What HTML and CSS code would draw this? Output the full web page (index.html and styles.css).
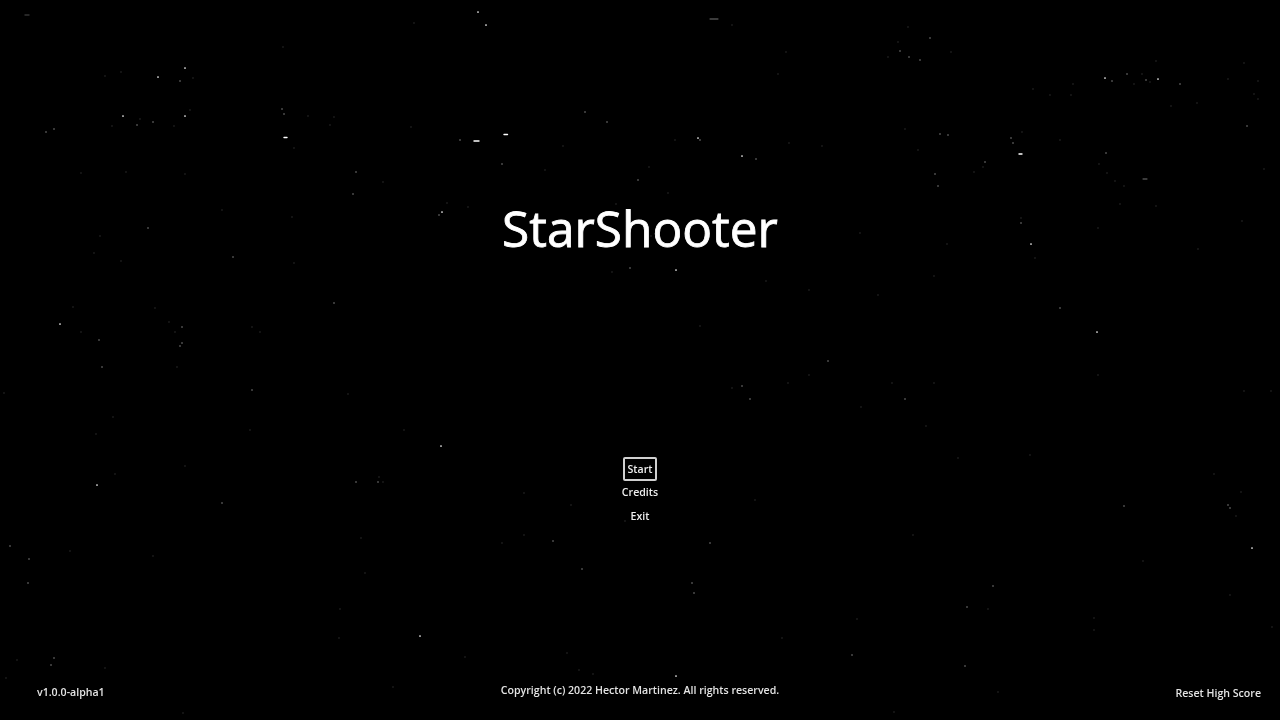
FILE: index.html
```html
<!DOCTYPE html>
<html lang="en">
<head>
<meta charset="utf-8">
<title>StarShooter</title>
<link rel="stylesheet" href="styles.css">
</head>
<body>
<svg class="stars" viewBox="0 0 1280 720" aria-hidden="true">
<path class="star-bright" d="M478 12h.01M486 25h.01M185 68h.01M158 77h.01M123 116h.01M185 116h.01M60 324h.01M442 212h.01M698 138h.01M742 156h.01M676 270h.01M1031 244h.01M1097 332h.01M1105 78h.01M1158 79h.01M441 446h.01M97 485h.01M420 636h.01M1252 548h.01M676 676h.01"/>
<path class="star-streak" d="M284 137.5h3M474 141h5M504 134.5h3.5M1019 154h3"/>
<path class="star-mid" d="M180 81h.01M137 125h.01M153 122h.01M282 109h.01M284 114h.01M460 140h.01M585 112h.01M607 122h.01M502 164h.01M356 172h.01M353 194h.01M638 180h.01M439 215h.01M148 228h.01M233 257h.01M334 303h.01M182 327h.01M182 343h.01M180 346h.01M99 340h.01M630 268h.01M46 132h.01M54 129h.01M700 140h.01M756 159h.01M940 134h.01M948 135h.01M1011 138h.01M1013 143h.01M985 162h.01M935 174h.01M938 186h.01M1106 153h.01M1021 223h.01M1060 308h.01M1247 126h.01M1112 81h.01M1127 74h.01M1146 80h.01M1180 84h.01M930 38h.01M900 51h.01M909 57h.01M920 60h.01M252 390h.01M222 503h.01M356 482h.01M378 482h.01M10 546h.01M29 559h.01M28 583h.01M553 541h.01M582 569h.01M54 658h.01M51 665h.01M102 367h.01M828 361h.01M742 386h.01M750 399h.01M905 399h.01M1124 506h.01M1228 505h.01M1230 508h.01M710 543h.01M692 583h.01M694 593h.01M993 586h.01M967 607h.01M852 655h.01M965 666h.01"/>
<path class="star-faint-streak" d="M710 19h8M1143 179h4"/>
<path class="star-dim" d="M414 23h.01M193 78h.01M121 72h.01M105 76h.01M140 119h.01M112 126h.01M174 126h.01M190 110h.01M308 116h.01M334 117h.01M330 125h.01M294 148h.01M411 127h.01M383 182h.01M126 172h.01M185 174h.01M81 173h.01M447 203h.01M468 207h.01M222 210h.01M292 217h.01M100 236h.01M94 253h.01M294 263h.01M121 261h.01M612 272h.01M73 307h.01M155 308h.01M169 322h.01M175 332h.01M81 332h.01M260 332h.01M252 327h.01M616 204h.01M545 170h.01M563 146h.01M25 15h4M283 47h.01M732 25h.01M675 140h.01M778 74h.01M786 52h.01M822 146h.01M789 143h.01M649 167h.01M668 193h.01M651 236h.01M860 233h.01M905 129h.01M918 150h.01M1022 132h.01M983 167h.01M974 172h.01M1060 140h.01M1124 186h.01M1115 181h.01M1107 173h.01M1099 164h.01M1120 204h.01M1156 206h.01M1021 218h.01M1035 258h.01M1098 228h.01M1242 221h.01M1198 249h.01M1264 169h.01M1156 61h.01M1142 74h.01M1150 82h.01M1134 84h.01M1073 84h.01M1050 95h.01M1033 89h.01M1071 95h.01M1171 106h.01M1197 103h.01M1254 94h.01M1258 99h.01M1258 81h.01M1228 79h.01M1244 63h.01M908 27h.01M888 57h.01M951 52h.01M898 42h.01M934 276h.01M878 295h.01M766 281h.01M700 326h.01M809 290h.01M947 244h.01M177 367h.01M250 430h.01M348 394h.01M185 466h.01M379 477h.01M383 482h.01M404 430h.01M96 434h.01M113 417h.01M115 474h.01M70 551h.01M153 556h.01M524 535h.01M502 543h.01M524 493h.01M571 505h.01M625 521h.01M340 609h.01M339 638h.01M105 668h.01M17 660h.01M6 678h.01M393 687h.01M567 653h.01M579 670h.01M593 674h.01M183 713h.01M465 657h.01M4 393h.01M361 538h.01M365 573h.01M809 375h.01M788 383h.01M1098 375h.01M732 388h.01M892 383h.01M934 383h.01M861 407h.01M926 426h.01M1030 455h.01M958 458h.01M1214 474h.01M1241 492h.01M1236 516h.01M1143 561h.01M913 535h.01M988 609h.01M857 619h.01M998 692h.01M894 712h.01M1094 618h.01M1094 630h.01M1230 595h.01M1271 391h.01M1244 391h.01M1272 627h.01M782 638h.01M755 500h.01"/>
</svg>
<main class="screen">
  <h1 class="title">StarShooter</h1>
  <nav class="menu">
    <button class="menu-item is-focused">Start</button>
    <button class="menu-item">Credits</button>
    <button class="menu-item">Exit</button>
  </nav>
  <footer class="footer">
    <span class="version">v1.0.0-alpha1</span>
    <span class="copyright">Copyright (c) 2022 Hector Martinez. All rights reserved.</span>
    <span class="reset">Reset High Score</span>
  </footer>
</main>
</body>
</html>
```
FILE: styles.css
```css
html, body {
  margin: 0;
  height: 100%;
  background: #000;
  overflow: hidden;
}

.stars {
  position: absolute;
  inset: 0;
  width: 1280px;
  height: 720px;
  fill: none;
  stroke-linecap: round;
  filter: blur(0.35px);
}

.star-bright { stroke: #fff; stroke-width: 1.7; }
.star-streak { stroke: #fff; stroke-width: 1.4; }
.star-mid { stroke: #8a8a8a; stroke-width: 1.5; }
.star-faint-streak { stroke: #777; stroke-width: 1; }
.star-dim { stroke: #333; stroke-width: 1.4; }

.screen {
  position: relative;
  width: 1280px;
  height: 720px;
  display: flex;
  flex-direction: column;
  align-items: center;
  font-family: "Open Sans", sans-serif;
  color: #fff;
  filter: blur(0.25px);
}

.title {
  margin: 195px 0 0;
  font-size: 49.6px;
  line-height: 66px;
  font-weight: 500;
  -webkit-text-stroke: 0.8px #fff;
}

.menu {
  margin-top: 196px;
  display: flex;
  flex-direction: column;
  align-items: center;
  gap: 0;
}

.menu-item {
  height: 23.5px;
  padding: 0 3px;
  border: 2px solid transparent;
  border-radius: 2px;
  background: none;
  color: #eee;
  font: 600 10.6px/16px "Open Sans", sans-serif;
  box-sizing: border-box;
}

.menu-item.is-focused {
  border-color: #d0d0d0;
}

.footer {
  margin-top: auto;
  width: 100%;
  box-sizing: border-box;
  padding: 0 19px 20px;
  display: grid;
  grid-template-columns: 1fr auto 1fr;
  align-items: end;
  font-size: 10.6px;
  line-height: 15px;
  font-weight: 600;
  color: #e4e4e4;
}

.version {
  margin-left: 18px;
}

.copyright {
  padding-bottom: 2px;
}

.reset {
  justify-self: end;
  margin-bottom: -1px;
}
```
